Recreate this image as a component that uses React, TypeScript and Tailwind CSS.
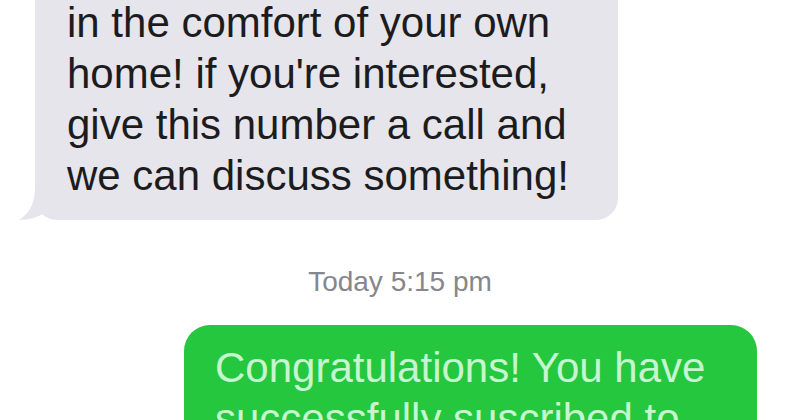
import React from 'react';

const sans = { fontFamily: '"Liberation Sans", Arial, sans-serif' };

function IncomingBubble({ lines }: { lines: string[] }) {
  return (
    <div className="relative ml-[35px] w-[583px] -mt-[30px]">
      <div className="rounded-[22px] bg-[#e6e5eb] pt-[27px] pb-[19px] pl-[32px] text-[42px] leading-[51px] text-[#1c1c1e]">
        {lines.map((l) => (
          <div key={l}>{l}</div>
        ))}
      </div>
      {/* tail */}
      <svg className="absolute -left-[16px] bottom-0" width="40" height="34" viewBox="0 0 40 34">
        <path d="M16 0 C16 16 12 26 0 34 C12 34 22 30 30 24 L40 24 L40 0 Z" fill="#e6e5eb" />
      </svg>
    </div>
  );
}

function OutgoingBubble({ lines }: { lines: string[] }) {
  return (
    <div className="ml-[184px] w-[573px] mt-[26px] rounded-[26px] bg-[#25c73f] pt-[17px] pb-[20px] pl-[31px] text-[42px] leading-[51px] text-[#c6f6cf]">
      {lines.map((l) => (
        <div key={l}>{l}</div>
      ))}
    </div>
  );
}

export default function App() {
  return (
    <div className="w-[800px] h-[420px] overflow-hidden bg-white" style={sans}>
      <IncomingBubble
        lines={[
          'in the comfort of your own',
          "home! if you're interested,",
          'give this number a call and',
          'we can discuss something!',
        ]}
      />

      <div className="mt-[45px] text-center text-[28px] leading-[34px] text-[#86868b]">
        Today 5:15 pm
      </div>

      <OutgoingBubble lines={['Congratulations! You have', 'successfully suscribed to']} />
    </div>
  );
}
